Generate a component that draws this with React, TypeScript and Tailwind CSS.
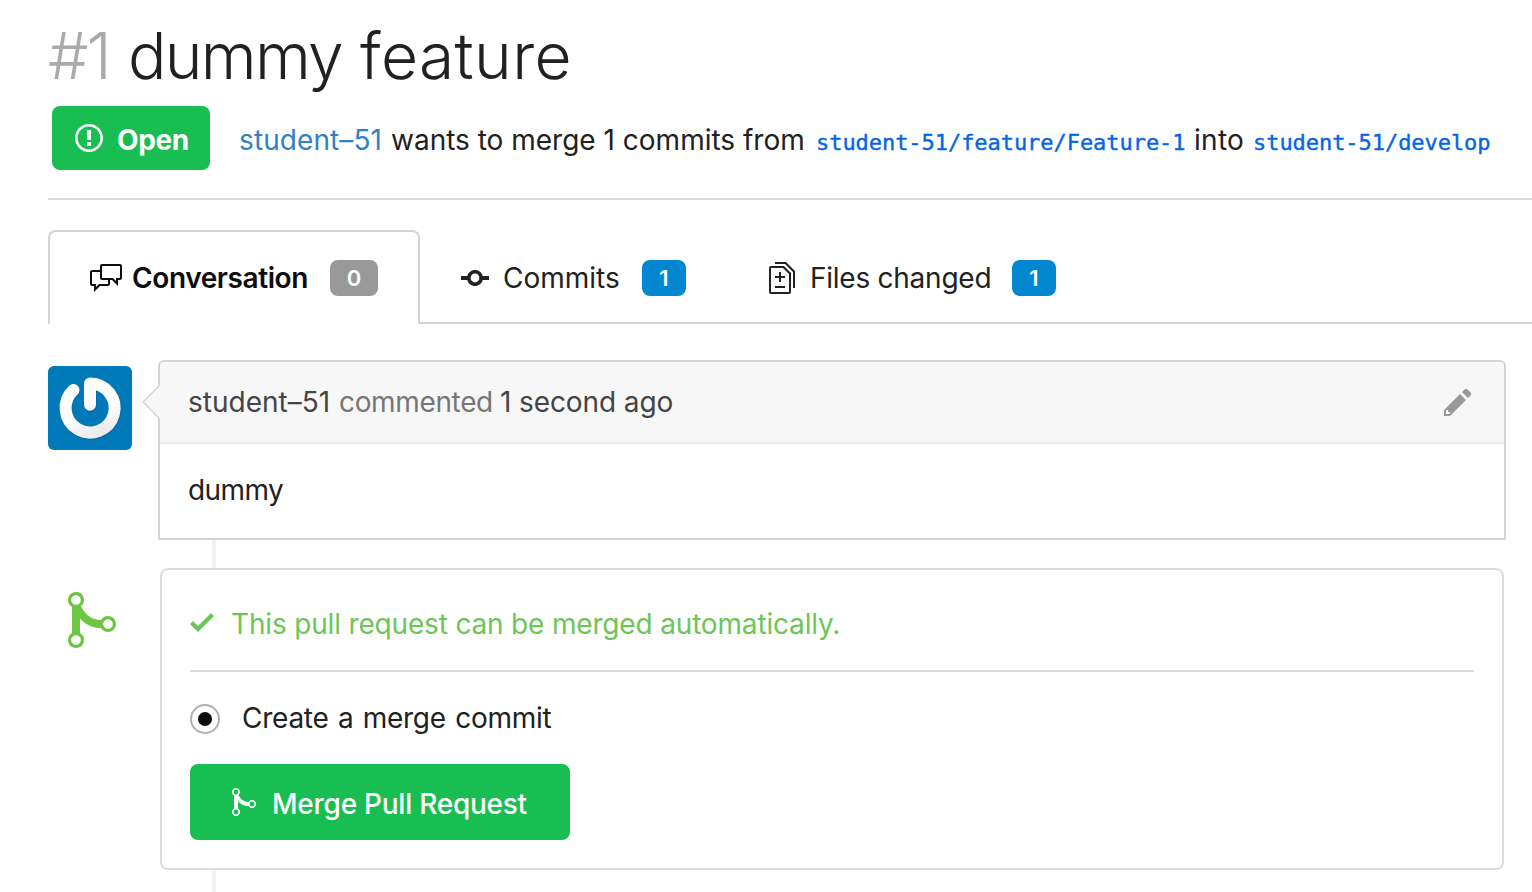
import type { ReactNode } from "react";

const icons = {
  issueOpened: {
    w: 14,
    d: "M7 2.3c3.14 0 5.7 2.56 5.7 5.7s-2.56 5.7-5.7 5.7A5.71 5.71 0 0 1 1.3 8c0-3.14 2.56-5.7 5.7-5.7zM7 1C3.14 1 0 4.14 0 8s3.14 7 7 7 7-3.14 7-7-3.14-7-7-7zm1 3H6v5h2V4zm0 6H6v2h2v-2z",
  },
  discussion: {
    w: 16,
    d: "M15 1H6c-.55 0-1 .45-1 1v2H1c-.55 0-1 .45-1 1v6c0 .55.45 1 1 1h1v3l3-3h4c.55 0 1-.45 1-1V9h1l3 3V9h1c.55 0 1-.45 1-1V2c0-.55-.45-1-1-1zM9 11H4.5L3 12.5V11H1V5h4v3c0 .55.45 1 1 1h3v2zm6-3h-2v1.5L11.5 8H6V2h9v6z",
  },
  commit: {
    w: 14,
    d: "M10.86 7c-.45-1.72-2-3-3.86-3-1.86 0-3.41 1.28-3.86 3H0v2h3.14c.45 1.72 2 3 3.86 3 1.86 0 3.41-1.28 3.86-3H14V7h-3.14zM7 10.2c-1.22 0-2.2-.98-2.2-2.2 0-1.22.98-2.2 2.2-2.2 1.22 0 2.2.98 2.2 2.2 0 1.22-.98 2.2-2.2 2.2z",
  },
  diff: {
    w: 13,
    d: "M6 7h2v1H6v2H5V8H3V7h2V5h1v2zm-3 6h5v-1H3v1zM7.5 2L11 5.5V15c0 .55-.45 1-1 1H1c-.55 0-1-.45-1-1V3c0-.55.45-1 1-1h6.5zM10 6L7 3H1v12h9V6zM8.5 0H3v1h5l4 4v8h1V4.5L8.5 0z",
  },
  pencil: {
    w: 14,
    d: "M0 12v3h3l8-8-3-3-8 8zm3 2H1v-2h1v1h1v1zm10.3-9.3L12 6 9 3l1.3-1.3a.996.996 0 0 1 1.41 0l1.59 1.59c.39.39.39 1.02 0 1.41z",
  },
  check: { w: 12, d: "M12 5l-8 8-4-4 1.5-1.5L4 10l6.5-6.5L12 5z" },
  merge: {
    w: 12,
    d: "M10 7c-.73 0-1.38.41-1.73 1.02V8C7.22 7.98 6 7.64 5.14 6.98c-.75-.58-1.5-1.61-1.89-2.44A1.993 1.993 0 0 0 2 .99C.89.99 0 1.89 0 3a2 2 0 0 0 1 1.72v6.56c-.59.35-1 .99-1 1.72 0 1.11.89 2 2 2a1.993 1.993 0 0 0 1-3.72V7.67c.67.7 1.44 1.27 2.3 1.69.86.42 2.03.63 2.97.64v-.02c.36.61 1 1.02 1.73 1.02 1.11 0 2-.89 2-2 0-1.11-.89-2-2-2zm-6.8 6c0 .66-.55 1.2-1.2 1.2-.65 0-1.2-.55-1.2-1.2 0-.65.55-1.2 1.2-1.2.65 0 1.2.55 1.2 1.2zM2 4.2C1.34 4.2.8 3.65.8 3c0-.65.55-1.2 1.2-1.2.65 0 1.2.55 1.2 1.2 0 .65-.55 1.2-1.2 1.2zm8 6c-.66 0-1.2-.55-1.2-1.2 0-.65.55-1.2 1.2-1.2.65 0 1.2.55 1.2 1.2 0 .65-.55 1.2-1.2 1.2z",
  },
};

function Icon({ name, className }: { name: keyof typeof icons; className: string }) {
  const { w, d } = icons[name];
  return (
    <svg viewBox={`0 0 ${w} 16`} className={`shrink-0 ${className}`} fill="currentColor" aria-hidden="true">
      <path fillRule="evenodd" d={d} />
    </svg>
  );
}

function Badge({ className, children }: { className: string; children: ReactNode }) {
  return (
    <span className={`flex h-9 shrink-0 items-center justify-center rounded-lg text-[22px] font-semibold text-white ${className}`}>
      {children}
    </span>
  );
}

function Branch({ className, children }: { className: string; children: ReactNode }) {
  return (
    <code
      className={`shrink-0 font-['DejaVu_Sans_Mono',monospace] text-[22px] tracking-[-0.05px] text-[#0366e6] [-webkit-text-stroke:0.4px_#0366e6] ${className}`}
    >
      {children}
    </code>
  );
}

function Avatar() {
  return (
    <svg viewBox="0 0 84 84" className="mt-[6px] h-[84px] w-[84px] shrink-0 rounded-md bg-[#0079b8]" fill="none">
      <defs>
        <linearGradient id="ring" x1="0.2" y1="0" x2="0.6" y2="1">
          <stop offset="0.6" stopColor="#ffffff" />
          <stop offset="1" stopColor="#ececec" />
        </linearGradient>
      </defs>
      <g strokeWidth="12" strokeLinecap="round" strokeLinejoin="round">
        <path d="M42 39.5V17.5A24.5 24.5 0 1 1 25.5 24" stroke="#003f66" strokeOpacity="0.3" transform="translate(0.6 1)" />
        <path d="M42 38.7V17.5A24.5 24.5 0 1 1 25.5 24" stroke="url(#ring)" />
      </g>
    </svg>
  );
}

function Header() {
  return (
    <header className="ml-12 border-b-2 border-[#dddddd] pb-7">
      <h1 className="flex h-[106px] items-start pt-4 text-[64px] leading-[80px] font-light whitespace-nowrap text-[#212121]">
        <span className="w-[80px] tracking-[-2px] text-[#aaaaaa]">#1</span>
        <span className="w-[232px] font-[330] tracking-[-1.7px]">dummy </span>
        <span className="font-[330] tracking-[0.4px]">feature</span>
      </h1>
      <div className="flex h-16 whitespace-nowrap">
        <span className="ml-1 flex h-16 w-[158px] shrink-0 items-center rounded-lg bg-[#19be52] pl-[23px] text-white">
          <Icon name="issueOpened" className="h-8 w-7" />
          <span className="mt-1 ml-[14px] text-[28px] font-bold tracking-[-0.4px]">Open</span>
        </span>
        <div className="ml-[29px] flex h-16 items-baseline pt-[2px] text-[28px] leading-[64px]">
          <a className="w-[152px] shrink-0 tracking-[0.1px] text-[#3081c2]">student–51</a>
          <span className="w-[425px] shrink-0">wants to merge 1 commits from</span>
          <Branch className="w-[378px]">student-51/feature/Feature-1</Branch>
          <span className="w-[59px] shrink-0 tracking-[0.3px]">into</span>
          <Branch className="">student-51/develop</Branch>
        </div>
      </div>
    </header>
  );
}

function Tabs() {
  return (
    <nav className="mt-[30px] ml-12 flex h-[94px] text-[28px] whitespace-nowrap">
      <div className="flex w-[372px] shrink-0 items-center rounded-t-lg border-2 border-b-0 border-[#d4d4d5] pl-10 text-[#0d0d0d]">
        <Icon name="discussion" className="h-8 w-8" />
        <span className="ml-[10px] w-[198px] font-semibold tracking-[-0.4px]">Conversation</span>
        <Badge className="w-12 bg-[#999999]">0</Badge>
      </div>
      <div className="flex grow items-center border-b-2 border-[#d4d4d5] pt-1 pl-[41px]">
        <Icon name="commit" className="h-8 w-7" />
        <span className="ml-[14px] w-[139px]">Commits</span>
        <Badge className="w-11 bg-[#0087d0]">1</Badge>
        <Icon name="diff" className="ml-[83px] h-8 w-[26px]" />
        <span className="ml-[15px] w-[202px] tracking-[-0.25px]">Files changed</span>
        <Badge className="w-11 bg-[#0087d0]">1</Badge>
      </div>
    </nav>
  );
}

function Comment() {
  return (
    <section className="mt-9 flex h-[180px] pl-12">
      <Avatar />
      <svg viewBox="0 0 18 36" className="z-10 -mr-[2px] ml-[10px] mt-6 h-9 w-[18px] shrink-0">
        <path d="M18 1.5V34.5L16.7 34.5L1.2 18L16.7 1.5Z" fill="#f7f7f7" />
        <path d="M17.2 1.5L1.2 18L17.2 34.5" fill="none" stroke="#d4d4d5" strokeWidth="1.5" />
      </svg>
      <div className="w-[1348px] shrink-0 rounded-t-md border-2 border-[#d4d4d5] text-[28px]">
        <div className="flex h-[82px] items-center rounded-t-sm border-b-2 border-[#ebebeb] bg-[#f7f7f7] pr-8 pl-[28px] text-[#444444]">
          <span className="w-[151px]">student–51</span>
          <span className="w-[161px] tracking-[-0.35px] text-[#767676]">commented</span>
          <span className="tracking-[-0.1px]">1 second ago</span>
          <Icon name="pencil" className="ml-auto h-8 w-7 text-[#999999]" />
        </div>
        <p className="pt-[25px] pl-[28px] leading-[42px] tracking-[-0.6px]">dummy</p>
      </div>
    </section>
  );
}

function MergePanel() {
  return (
    <section className="flex h-[302px] pl-[68px]">
      <Icon name="merge" className="mt-5 h-16 w-12 text-[#6cc644]" />
      <div className="ml-11 w-[1344px] rounded-lg border-2 border-[#dddddd] px-7 text-[28px]">
        <div className="flex h-[102px] items-center border-b-2 border-[#dddddd] pt-2 text-[#6cc656]">
          <Icon name="check" className="-mt-[4px] h-8 w-6" />
          <span className="ml-[17px] tracking-[-0.17px]">This pull request can be merged automatically.</span>
        </div>
        <label className="flex h-[92px] items-center">
          <span className="mt-[2px] flex h-[30px] w-[30px] items-center justify-center rounded-full border-2 border-[#b0b0b0]">
            <span className="h-[14px] w-[14px] rounded-full bg-[#0d0d0d]" />
          </span>
          <span className="ml-[22px] tracking-[-0.25px] [word-spacing:1.7px]">Create a merge commit</span>
        </label>
        <button className="flex h-[76px] w-[380px] items-center rounded-lg bg-[#19be52] pt-1 pl-[42px] font-medium text-white">
          <Icon name="merge" className="-mt-[4px] h-8 w-6" />
          <span className="ml-4 tracking-[-0.25px]">Merge Pull Request</span>
        </button>
      </div>
    </section>
  );
}

export default function App() {
  return (
    <main className="h-[892px] w-[1532px] overflow-hidden bg-white font-['Inter',sans-serif] text-[#212121]">
      <Header />
      <Tabs />
      <Comment />
      <div className="ml-[212px] h-7 w-1 bg-[#f2f2f2]" />
      <MergePanel />
      <div className="ml-[212px] h-[22px] w-1 bg-[#f2f2f2]" />
    </main>
  );
}
